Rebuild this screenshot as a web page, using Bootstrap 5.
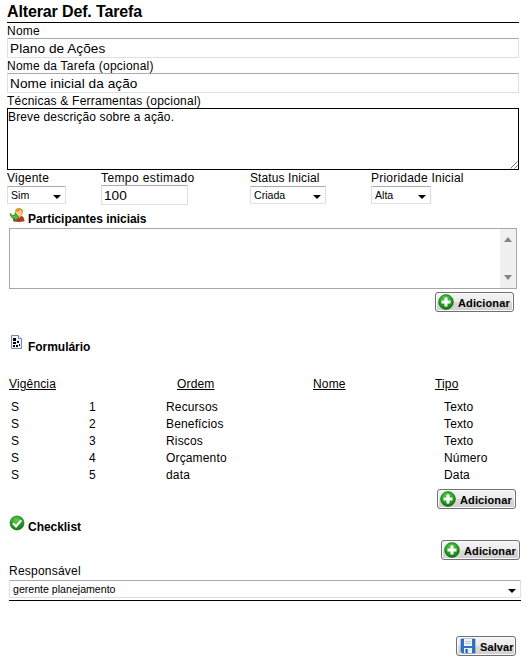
<!DOCTYPE html>
<html lang="pt-BR">
<head>
<meta charset="utf-8">
<title>Alterar Def. Tarefa</title>
<link href="https://cdn.jsdelivr.net/npm/bootstrap@5.3.0/dist/css/bootstrap.min.css" rel="stylesheet">
<style>
body{font:12px/15px "Liberation Sans",Arial,sans-serif;color:#000;background:#fff;width:530px;height:661px;overflow:hidden}
.page{padding:0 11px 0 7px}
.page-title{font-size:16px;line-height:20px;letter-spacing:-.13px;font-weight:700;height:23px;padding-top:2px;border-bottom:1px solid #000;margin:0}
.lbl{display:block;height:15px;line-height:16px;letter-spacing:.22px;white-space:nowrap}
.lbl.wide{letter-spacing:.4px}
.lbl.tight{letter-spacing:.1px}
.form-control.box,.form-select.pick{border:1px solid #dedfe4;border-top-color:#a9abb2;border-radius:1px;color:#000;background-color:#fff;display:block}
.form-control.box{height:20px;min-height:0;padding:0 2px;font-size:13.6px;line-height:18px;letter-spacing:.06px}
.form-control.area{height:62px;min-height:0;padding:0;border:1px solid #000;border-radius:0;font-size:12px;line-height:16px;letter-spacing:.14px;color:#000;resize:none;display:block}
.grip{right:1px;bottom:1px;width:8px;height:8px}
.form-select.pick{height:18px;padding:0 18px 0 3px;font-size:10.6px;line-height:16px;background-image:url("data:image/svg+xml,%3Csvg xmlns='http://www.w3.org/2000/svg' viewBox='0 0 8 4'%3E%3Cpath d='M0 0h8L4 4z'/%3E%3C/svg%3E");background-size:8px 4px;background-position:right 4px top 8px}
.opts{height:37px}
.c1{width:94px}.c2{width:149px}.c3{width:121px}
.w1{width:59px}.w3{width:76px}.w4{width:60px}
.form-control.hours{width:87px}
.shift{margin-top:1px}
.head{font-size:12px;font-weight:700;line-height:15px;margin:0;padding-left:2px;letter-spacing:-.04px}
.head svg{width:16px;height:16px;margin-right:3px;flex:none}
.head span{padding-top:5px}
.people{height:61px;margin:0 2px 0 2px;width:508px;border:1px solid #a7a7a7}
.bar{width:16px;background:#f0f0f0}
.bar svg{width:8px;height:5px}
.btn.act{height:20px;padding:0 3px 0 3px;border:1px solid #707070;border-radius:3px;background:linear-gradient(#f4f4f4,#ebebeb 48%,#dadada 52%,#cfcfcf);font-size:11px;line-height:20px;font-weight:700;letter-spacing:.12px;color:#000;box-shadow:inset 0 0 0 1px #fafafa}
.btn.act svg{width:16px;height:16px;flex:none}
.btn.act span{padding-top:2px}
.add{width:79px}.save{width:60px}
.btn.act.add{padding-left:2px}
.act-row{height:20px}
.r1{margin:3px -3px 0 0}.r1 .add{margin-right:8px}
.s2{margin-top:22px;height:22px}.s1{margin-top:3px;height:21px}.s3{margin-top:6px;height:25px}
.s2 span{padding-top:6px}
.cols{margin-top:21px;height:22px;padding-left:2px}
.cols span{text-decoration:underline;letter-spacing:.15px}
.h1c{width:168px}.h2c{width:136px}.h3c{width:122px}
.line{height:17px;line-height:17px;padding-left:4px;letter-spacing:.15px}
.d1{width:78px}.d2{width:77px}.d3{width:278px}
.r2{margin:5px -5px 0 0}.r2 .add{margin-right:8px}
.resp{width:512px;margin-left:2px}
.resp .act-row .add{margin-right:1px}
.resp .lbl{margin-top:3px;height:17px}
.resp .under{height:21px;border-bottom:1px solid #000}
.save-row{margin:35px 5px 0 0}
</style>
</head>
<body>
<svg class="position-absolute" width="0" height="0" xmlns="http://www.w3.org/2000/svg">
<defs>
<radialGradient id="green" cx=".45" cy=".3" r=".75"><stop offset="0" stop-color="#62cf4b"/><stop offset=".55" stop-color="#27a01f"/><stop offset="1" stop-color="#0c6e10"/></radialGradient>
</defs>
</svg>
<main class="page">
<h1 class="page-title">Alterar Def. Tarefa</h1>
<label class="lbl" for="nome">Nome</label>
<input id="nome" class="form-control box" value="Plano de Ações">
<label class="lbl" for="tarefa">Nome da Tarefa (opcional)</label>
<input id="tarefa" class="form-control box" value="Nome inicial da ação">
<label class="lbl" for="tec">Técnicas &amp; Ferramentas (opcional)</label>
<div class="position-relative">
<textarea id="tec" class="form-control area">Breve descrição sobre a ação.</textarea>
<svg class="grip position-absolute" viewBox="0 0 8 8" stroke="#777" fill="none"><path d="M0.5 7.5l7-7M4.500 7.500l3-3"/></svg>
</div>
<div class="d-flex opts">
<div class="c1"><label class="lbl">Vigente</label><select class="form-select pick w1 shift"><option>Sim</option></select></div>
<div class="c2"><label class="lbl wide">Tempo estimado</label><input class="form-control box hours" value="100"></div>
<div class="c3"><label class="lbl tight">Status Inicial</label><select class="form-select pick w3 shift"><option>Criada</option></select></div>
<div><label class="lbl">Prioridade Inicial</label><select class="form-select pick w4 shift"><option>Alta</option></select></div>
</div>

<h2 class="head d-flex s1 mt-0"><svg viewBox="0 0 16 16"><path d="M4 14.300c0-4 2-6 5.500-6s6 2 6 6q-5.500 1.500-11.500 0z" fill="#b53b20"/><path d="M8 8.500l2 3 2.500-3" fill="#f2c27a"/><circle cx="10" cy="5" r="4" fill="#d99a35"/><path d="M7 5q3 0 4-2 2 1 2 3-.5 3-3 3t-3-4z" fill="#f6cd91"/><path d="M1 6.500q2 2.500 5 2V6.200l4 4-4 4v-2.400Q2 11.800 1 6.500z" fill="#4cc13e" stroke="#20821f" stroke-width=".8"/></svg><span>Participantes iniciais</span></h2>
<div class="people d-flex justify-content-end"><div class="bar d-flex flex-column justify-content-between align-items-center py-2"><svg viewBox="0 0 8 5"><path d="M0 5l4-5 4 5z" fill="#858585"/></svg><svg viewBox="0 0 8 5"><path d="M0 0h8L4 5z" fill="#858585"/></svg></div></div>
<div class="act-row r1 d-flex justify-content-end"><button class="btn act add d-flex align-items-center gap-1"><svg viewBox="0 0 16 16"><circle cx="8" cy="8" r="7.400" fill="url(#green)" stroke="#16731a" stroke-width=".7"/><path d="M6.500 3.500h3v3h3v3h-3v3h-3v-3h-3v-3h3z" fill="#fff"/></svg><span>Adicionar</span></button></div>

<h2 class="head d-flex s2"><svg viewBox="0 0 16 16"><path d="M2.500 1.500h7l3 3v10h-10z" fill="#eef3fb" stroke="#7485a8"/><path d="M9.500 1.500v3h3" fill="#fff" stroke="#7485a8"/><path d="M4 4h3v3H4zM4 8h3v2H4zM8 7h2v2H8zM4 11h2v2H4zM7 11h2v2H7zM10 10h1v2h-1z" fill="#000"/></svg><span>Formulário</span></h2>
<div class="cols d-flex"><div class="h1c"><span>Vigência</span></div><div class="h2c"><span>Ordem</span></div><div class="h3c"><span>Nome</span></div><div><span>Tipo</span></div></div>
<div class="line d-flex"><div class="d1">S</div><div class="d2">1</div><div class="d3">Recursos</div><div>Texto</div></div>
<div class="line d-flex"><div class="d1">S</div><div class="d2">2</div><div class="d3">Benefícios</div><div>Texto</div></div>
<div class="line d-flex"><div class="d1">S</div><div class="d2">3</div><div class="d3">Riscos</div><div>Texto</div></div>
<div class="line d-flex"><div class="d1">S</div><div class="d2">4</div><div class="d3">Orçamento</div><div>Número</div></div>
<div class="line d-flex"><div class="d1">S</div><div class="d2">5</div><div class="d3">data</div><div>Data</div></div>
<div class="act-row r2 d-flex justify-content-end"><button class="btn act add d-flex align-items-center gap-1"><svg viewBox="0 0 16 16"><circle cx="8" cy="8" r="7.400" fill="url(#green)" stroke="#16731a" stroke-width=".7"/><path d="M6.500 3.500h3v3h3v3h-3v3h-3v-3h-3v-3h3z" fill="#fff"/></svg><span>Adicionar</span></button></div>

<h2 class="head d-flex s3"><svg viewBox="0 0 16 16"><circle cx="8" cy="8" r="7" fill="url(#green)" stroke="#16731a" stroke-width=".7"/><path d="M4 8.300l3 3 5.200-6" fill="none" stroke="#fff" stroke-width="2.200"/></svg><span>Checklist</span></h2>
<div class="resp">
<div class="act-row d-flex justify-content-end"><button class="btn act add d-flex align-items-center gap-1"><svg viewBox="0 0 16 16"><circle cx="8" cy="8" r="7.400" fill="url(#green)" stroke="#16731a" stroke-width=".7"/><path d="M6.500 3.500h3v3h3v3h-3v3h-3v-3h-3v-3h3z" fill="#fff"/></svg><span>Adicionar</span></button></div>
<label class="lbl" for="resp">Responsável</label>
<div class="under"><select id="resp" class="form-select pick"><option>gerente planejamento</option></select></div>
<div class="act-row save-row d-flex justify-content-end"><button class="btn act save d-flex align-items-center gap-1"><svg viewBox="0 0 16 16"><path d="M1 1h14v14H2.500L1 13.500z" fill="#2f74c4" stroke="#1f5aa6" stroke-width=".6"/><path d="M4 1h8v7H4z" fill="#f4f6fa"/><path d="M5 3.500h6M5 5.500h6" stroke="#aab4c4" stroke-width=".8"/><path d="M4 10h8v5H4z" fill="#e6edf6"/><path d="M5.500 11h2.200v4H5.500z" fill="#1f5aa6"/></svg><span>Salvar</span></button></div>
</div>
</main>
<script src="https://cdn.jsdelivr.net/npm/bootstrap@5.3.0/dist/js/bootstrap.bundle.min.js"></script>
</body>
</html>
